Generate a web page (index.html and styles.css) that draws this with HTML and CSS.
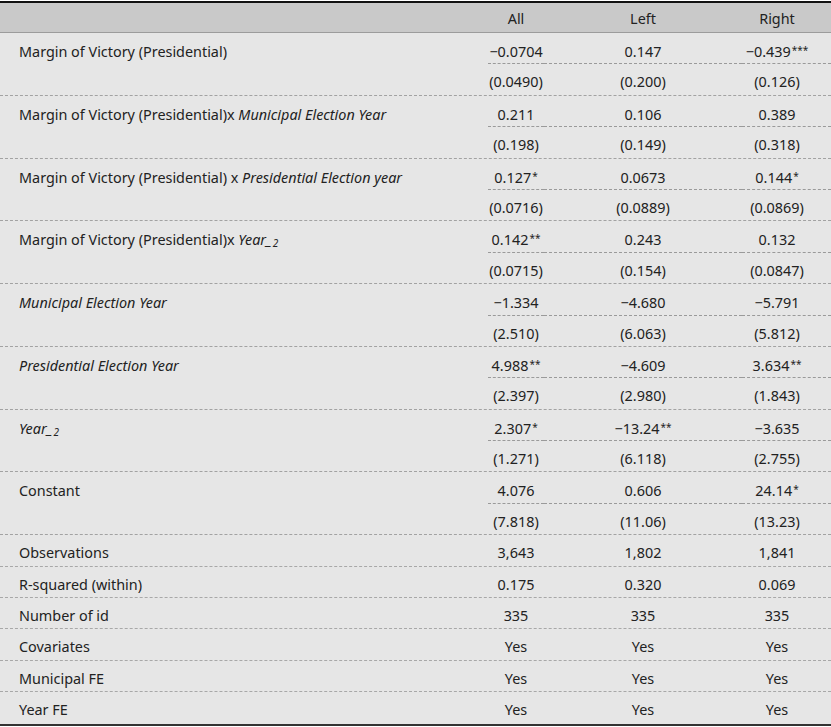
FILE: index.html
```html
<!DOCTYPE html>
<html lang="en">
<head>
<meta charset="utf-8">
<title>Regression table</title>
<link rel="stylesheet" href="styles.css">
</head>
<body>
<div class="table">
  <div class="row head">
    <div class="lab"></div><div class="c">All</div><div class="c">Left</div><div class="c">Right</div>
  </div>

  <div class="block">
    <div class="lab">Margin of Victory (Presidential)</div>
    <div class="c coef">−0.0704</div><div class="c coef">0.147</div><div class="c coef">−0.439<sup>***</sup></div>
    <div class="c se">(0.0490)</div><div class="c">(0.200)</div><div class="c">(0.126)</div>
  </div>

  <div class="block">
    <div class="lab">Margin of Victory (Presidential)x <i>Municipal Election Year</i></div>
    <div class="c coef">0.211</div><div class="c coef">0.106</div><div class="c coef">0.389</div>
    <div class="c se">(0.198)</div><div class="c">(0.149)</div><div class="c">(0.318)</div>
  </div>

  <div class="block">
    <div class="lab">Margin of Victory (Presidential) x <i>Presidential Election year</i></div>
    <div class="c coef">0.127<sup>*</sup></div><div class="c coef">0.0673</div><div class="c coef">0.144<sup>*</sup></div>
    <div class="c se">(0.0716)</div><div class="c">(0.0889)</div><div class="c">(0.0869)</div>
  </div>

  <div class="block">
    <div class="lab">Margin of Victory (Presidential)x <i>Year_<sub>2</sub></i></div>
    <div class="c coef">0.142<sup>**</sup></div><div class="c coef">0.243</div><div class="c coef">0.132</div>
    <div class="c se">(0.0715)</div><div class="c">(0.154)</div><div class="c">(0.0847)</div>
  </div>

  <div class="block">
    <div class="lab"><i>Municipal Election Year</i></div>
    <div class="c coef">−1.334</div><div class="c coef">−4.680</div><div class="c coef">−5.791</div>
    <div class="c se">(2.510)</div><div class="c">(6.063)</div><div class="c">(5.812)</div>
  </div>

  <div class="block">
    <div class="lab"><i>Presidential Election Year</i></div>
    <div class="c coef">4.988<sup>**</sup></div><div class="c coef">−4.609</div><div class="c coef">3.634<sup>**</sup></div>
    <div class="c se">(2.397)</div><div class="c">(2.980)</div><div class="c">(1.843)</div>
  </div>

  <div class="block">
    <div class="lab"><i>Year_<sub>2</sub></i></div>
    <div class="c coef">2.307<sup>*</sup></div><div class="c coef">−13.24<sup>**</sup></div><div class="c coef">−3.635</div>
    <div class="c se">(1.271)</div><div class="c">(6.118)</div><div class="c">(2.755)</div>
  </div>

  <div class="block">
    <div class="lab">Constant</div>
    <div class="c coef">4.076</div><div class="c coef">0.606</div><div class="c coef">24.14<sup>*</sup></div>
    <div class="c se">(7.818)</div><div class="c">(11.06)</div><div class="c">(13.23)</div>
  </div>

  <div class="row stat">
    <div class="lab">Observations</div><div class="c">3,643</div><div class="c">1,802</div><div class="c">1,841</div>
  </div>
  <div class="row stat">
    <div class="lab">R-squared (within)</div><div class="c">0.175</div><div class="c">0.320</div><div class="c">0.069</div>
  </div>
  <div class="row stat">
    <div class="lab">Number of id</div><div class="c">335</div><div class="c">335</div><div class="c">335</div>
  </div>
  <div class="row stat">
    <div class="lab">Covariates</div><div class="c">Yes</div><div class="c">Yes</div><div class="c">Yes</div>
  </div>
  <div class="row stat">
    <div class="lab">Municipal FE</div><div class="c">Yes</div><div class="c">Yes</div><div class="c">Yes</div>
  </div>
  <div class="row stat last">
    <div class="lab">Year FE</div><div class="c">Yes</div><div class="c">Yes</div><div class="c">Yes</div>
  </div>
</div>
</body>
</html>
```

FILE: styles.css
```css
* { box-sizing: border-box; }

html, body {
  margin: 0;
  padding: 0;
  background: #ffffff;
}

body {
  width: 831px;
  font-family: "Noto Sans", "Open Sans", sans-serif;
  font-size: 14.4px;
  color: #222222;
}

.table {
  margin-top: 1px;
  background: #e6e6e6;
  border-top: 2px solid #111111;
  border-bottom: 2px solid #333333;
}

.row,
.block {
  display: grid;
  grid-template-columns: 488px 56px 198px 1fr;
}

.lab {
  padding-left: 19px;
  white-space: nowrap;
}

.c {
  text-align: center;
  white-space: nowrap;
}

.row > .c:last-child,
.block > .c:nth-child(4),
.block > .c:nth-child(7) {
  padding-right: 19px;
}

/* header */
.head {
  height: 30px;
  background: #c9c9c9;
  border-bottom: 1px solid #9c9c9c;
}

.head > div {
  line-height: 28px;
  padding-top: 2px;
}

/* variable blocks: coefficient row + standard-error row */
.block {
  grid-template-rows: 31.4px 30.4px;
  border-bottom: 1px dashed #a2a2a2;
}

.block > :nth-child(5) {
  grid-column-start: 2;
}

.block > .lab,
.block > .c {
  line-height: 22.4px;
  padding-top: 8px;
}

.block > .se,
.block > .se ~ .c {
  line-height: 22.4px;
  padding-top: 7px;
}

.coef {
  border-bottom: 1px dashed #9a9a9a;
}

/* statistics rows */
.stat {
  height: 31.4px;
  border-bottom: 1px dashed #a8a8a8;
}

.stat > div {
  line-height: 25px;
  padding-top: 5px;
}

.stat.last {
  border-bottom: none;
}

sup {
  font-size: 10px;
  line-height: 0;
  vertical-align: 3px;
  margin-left: 1px;
}

sub {
  font-size: 10px;
  line-height: 0;
  vertical-align: -2px;
  margin-left: 1px;
}
```
